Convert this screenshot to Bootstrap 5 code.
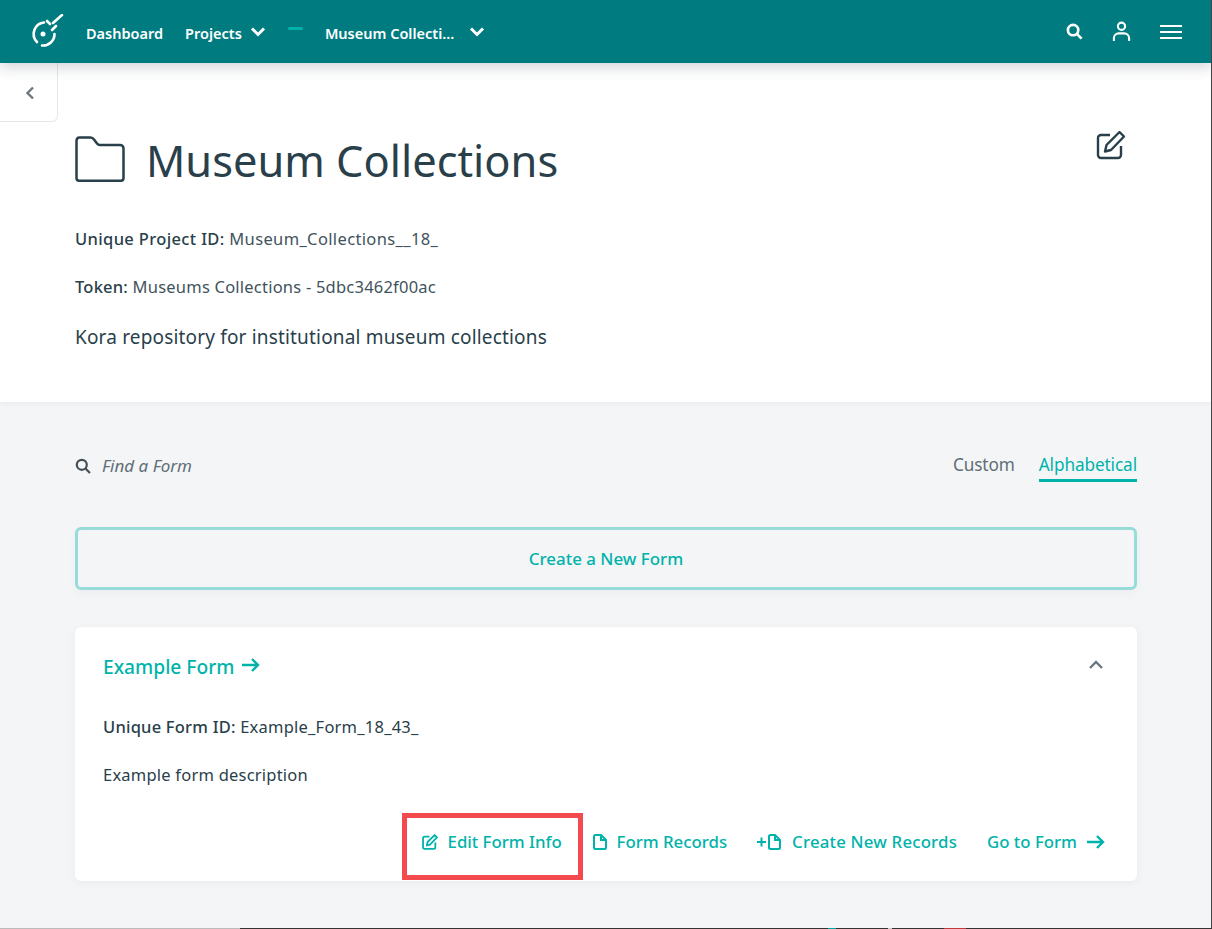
<!DOCTYPE html>
<html lang="en">
<head>
    <meta charset="UTF-8">
    <title>Museum Collections</title>
    <link href="https://cdn.jsdelivr.net/npm/bootstrap@5.3.0/dist/css/bootstrap.min.css" rel="stylesheet">
    <style>
        html, body { height: 100%; }
        body {
            font-family: "Noto Sans", "Open Sans", sans-serif;
            background: #f4f5f7;
            color: #29404a;
            overflow: hidden;
        }
        .top-bar {
            height: 63px;
            background: #007c80;
            box-shadow: 0 4px 14px rgba(21, 39, 48, .2);
            padding: 0 30px;
            position: relative;
            z-index: 2;
        }
        .top-link { color: #fff; font-size: 14.5px; font-weight: 600; text-decoration: none; white-space: nowrap; padding-top: 4px; }
        .top-dash { width: 15px; height: 3px; background: #00b3aa; border-radius: 2px; margin-top: -6px; margin-left: 22px; }
        .back-tab {
            position: absolute; left: 0; top: 63px; width: 58px; height: 59px;
            background: #fff; border: 1px solid #e5e7e9; border-top: 0; border-left: 0;
            border-radius: 0 0 6px 0; z-index: 1;
            padding: 2px 0 0 2px;
        }
        .head-panel { height: 339px; background: #fff; padding: 0 75px; box-shadow: 0 1px 6px rgba(21, 39, 48, .06); }
        .head-title { font-size: 43.400px; font-weight: 400; height: 46px; line-height: 50px; margin: 0 0 0 21px; color: #29404a; }
        .meta-line { font-size: 16.5px; letter-spacing: .22px; line-height: 22px; margin: 0; color: #3f535c; }
        .meta-line b { font-weight: 500; color: #29404a; }
        .meta-wide { letter-spacing: .36px; }
        .desc-line { font-size: 19px; letter-spacing: .17px; line-height: 26px; margin: 0; color: #29404a; }
        .edit-head { margin: 0 11px 28px 0; }
        .body-panel { padding: 0 75px; }
        .find-text { font-size: 17px; font-style: italic; color: #5f6e76; letter-spacing: 0; }
        .sort-group { padding-top: 2px; }
        .sort-link { font-size: 17.200px; color: #5f6e76; letter-spacing: -.1px; text-decoration: none; padding-bottom: 2px; line-height: 24px; }
        .sort-active { color: #00b3aa; border-bottom: 3px solid #00b3aa; }
        .new-form {
            height: 63px; border: 3px solid #97dcd8; border-radius: 6px; background: transparent;
            color: #00b3aa; font-size: 16.900px; font-weight: 500; padding-top: 2px;
            box-shadow: 0 4px 10px rgba(21, 39, 48, .03);
        }
        .form-box { height: 254px; background: #fff; border-radius: 6px; box-shadow: 0 2px 10px rgba(21, 39, 48, .05); padding: 0 32px 0 28px; }
        .form-name { color: #00b3aa; font-size: 19.200px; font-weight: 500; text-decoration: none; }
        .form-act { color: #00b3aa; font-size: 16.800px; font-weight: 500; text-decoration: none; white-space: nowrap; }
        .act-row { height: 67px; padding-bottom: 9px; gap: 10px; }
        .edit-mark { width: 181px; border: 5px solid #f24a4d; padding-left: 15px; }
        .screen-edge { position: fixed; top: 0; right: 0; width: 1px; height: 100%; background: #444; z-index: 5; }
        .screen-foot {
            position: fixed; left: 0; right: 0; bottom: 0; height: 1px; z-index: 5;
            background: linear-gradient(90deg, #bbb 0 240px, #333 240px 828px, #00a79d 828px 836px, #333 836px 888px, #ccc 888px 892px, #333 892px 944px, #c0393b 944px 966px, #333 966px);
        }
    </style>
</head>
<body>
    <nav class="top-bar d-flex align-items-center">
        <svg width="36" height="36" viewBox="0 0 36 36" fill="none" stroke="#fff" stroke-width="2.600" stroke-linecap="round">
            <path d="M14 8.500A11.500 11.500 0 0 0 7 28"/>
            <path d="M12 31.500A11.500 11.500 0 0 0 24.500 20"/>
            <path d="M23 9 32 1"/>
            <path d="M17 7l3 3"/>
            <path d="M22 16l4-4"/>
            <circle cx="13" cy="20" r="2.500" fill="#fff" stroke="none"/>
        </svg>
        <a class="top-link" style="margin-left:20px" href="#">Dashboard</a>
        <a class="top-link" style="margin-left:22px" href="#">Projects</a>
        <svg style="margin-left:8px" width="16" height="12" viewBox="0 0 16 12" fill="none" stroke="#fff" stroke-width="3"><path d="M2 2.500l6 6 6-6"/></svg>
        <div class="top-dash"></div>
        <a class="top-link" style="margin-left:22px" href="#">Museum Collecti...</a>
        <svg style="margin-left:15px" width="16" height="12" viewBox="0 0 16 12" fill="none" stroke="#fff" stroke-width="3"><path d="M2 2.500l6 6 6-6"/></svg>
        <div class="ms-auto d-flex align-items-center" style="gap:29px">
            <svg width="17" height="17" viewBox="0 0 18 18" fill="none" stroke="#fff" stroke-width="2.800"><circle cx="7.500" cy="7.500" r="5.500"/><path d="M11.500 11.500l5 5"/></svg>
            <svg width="19" height="21" viewBox="0 0 20 22" fill="none" stroke="#fff" stroke-width="2.200"><circle cx="10" cy="5.500" r="3.800"/><path d="M2 21v-3c0-3 2.500-5 5-5h6c2.500 0 5 2 5 5v3"/></svg>
            <svg width="22" height="16" viewBox="0 0 22 16" fill="none" stroke="#fff" stroke-width="2.200"><path d="M0 2h22M0 8h22M0 14h22"/></svg>
        </div>
    </nav>

    <div class="back-tab d-flex align-items-center justify-content-center">
        <svg width="10" height="14" viewBox="0 0 10 14" fill="none" stroke="#6c7780" stroke-width="2.400"><path d="M8 1.500 2.500 7 8 12.500"/></svg>
    </div>

    <section class="head-panel">
        <div class="d-flex align-items-center justify-content-between" style="padding-top:67px">
            <div class="d-flex align-items-center">
                <svg width="50" height="46" viewBox="0 0 50 46" fill="none" stroke="#29404a" stroke-width="2.500" stroke-linejoin="round">
                    <path d="M1.500 5c0-2 1-3.500 3-3.500h11c1.500 0 2.500.5 3.500 2l3 4c.7 1 1.500 1.500 3 1.500h20c2 0 3.500 1.500 3.500 3.500V42c0 1.800-1 2.700-2.500 2.700H4c-1.500 0-2.500-1-2.500-2.700z"/>
                </svg>
                <h1 class="head-title">Museum Collections</h1>
            </div>
            <svg class="edit-head" width="30" height="30" viewBox="0 0 30 30" fill="none" stroke="#29404a" stroke-width="2.400" stroke-linejoin="round">
                <path d="M14 5H5a3 3 0 0 0-3 3v17a3 3 0 0 0 3 3h17a3 3 0 0 0 3-3v-9"/>
                <path d="M23.500 2 28 6.500 15 20l-6 1.500L10.500 15z"/>
            </svg>
        </div>
        <p class="meta-line meta-wide" style="margin-top:40px"><b>Unique Project ID:</b> Museum_Collections__18_</p>
        <p class="meta-line" style="margin-top:26px"><b>Token:</b> Museums Collections - 5dbc3462f00ac</p>
        <p class="desc-line" style="margin-top:26px">Kora repository for institutional museum collections</p>
    </section>

    <main class="body-panel">
        <div class="d-flex justify-content-between align-items-center" style="padding-top:48px;height:80px">
            <div class="d-flex align-items-center gap-2">
                <svg width="16" height="16" viewBox="0 0 16 16" fill="none" stroke="#444f55" stroke-width="2.200"><circle cx="6.800" cy="6.800" r="5"/><path d="M10.500 10.500l4.500 4.500"/></svg>
                <span class="find-text" style="margin-left:3px">Find a Form</span>
            </div>
            <div class="sort-group d-flex gap-4">
                <a class="sort-link" href="#">Custom</a>
                <a class="sort-link sort-active" href="#">Alphabetical</a>
            </div>
        </div>
        <button class="new-form w-100 d-block" style="margin-top:45px">Create a New Form</button>
        <article class="form-box" style="margin-top:37px">
            <div class="d-flex justify-content-between align-items-center" style="padding-top:26px">
                <a class="form-name d-flex align-items-center gap-2" href="#">Example Form
                    <svg class="mb-1" width="18" height="16" viewBox="0 0 18 16" fill="none" stroke="#00b3aa" stroke-width="2.400"><path d="M0 8h16M10 2l6 6-6 6"/></svg>
                </a>
                <svg style="margin:-4px 1px 0 0" width="16" height="10" viewBox="0 0 16 10" fill="none" stroke="#6c7780" stroke-width="2.400"><path d="M2 8l6-6 6 6"/></svg>
            </div>
            <p class="meta-line" style="margin-top:34px;color:#29404a"><b>Unique Form ID:</b> Example_Form_18_43_</p>
            <p class="meta-line" style="margin-top:26px;color:#29404a">Example form description</p>
            <div class="d-flex justify-content-end align-items-center" style="margin-top:27px">
                <div class="act-row edit-mark d-flex align-items-center">
                    <svg width="16" height="16" viewBox="0 0 30 30" fill="none" stroke="#00b3aa" stroke-width="3.400" stroke-linejoin="round"><path d="M14 5H5a3 3 0 0 0-3 3v17a3 3 0 0 0 3 3h17a3 3 0 0 0 3-3v-9"/><path d="M23.500 2 28 6.500 15 20l-6 1.500L10.500 15z"/></svg>
                    <a class="form-act" href="#">Edit Form Info</a>
                </div>
                <div class="act-row d-flex align-items-center" style="margin-left:10px">
                    <svg width="14" height="16" viewBox="0 0 14 16" fill="none" stroke="#00b3aa" stroke-width="2"><path d="M1 2.500C1 1.500 1.500 1 2.500 1H8l5 5v7.500c0 1-.5 1.500-1.500 1.500h-9C1.500 15 1 14.500 1 13.500z"/><path d="M8 1v5h5"/></svg>
                    <a class="form-act" href="#">Form Records</a>
                </div>
                <div class="act-row d-flex align-items-center" style="margin-left:30px">
                    <svg width="24" height="16" viewBox="0 0 24 16" fill="none" stroke="#00b3aa" stroke-width="2"><path d="M0 8h9M4.500 3.500v9"/><path d="M12 2.500C12 1.500 12.500 1 13.500 1H18l5 5v7.500c0 1-.5 1.500-1.500 1.500h-8c-1 0-1.500-.5-1.500-1.500z"/><path d="M18 1v5h5"/></svg>
                    <a class="form-act" style="margin-left:1px;letter-spacing:.2px" href="#">Create New Records</a>
                </div>
                <div class="act-row d-flex align-items-center" style="margin-left:30px">
                    <a class="form-act" href="#">Go to Form</a>
                    <svg width="18" height="16" viewBox="0 0 18 16" fill="none" stroke="#00b3aa" stroke-width="2.400"><path d="M0 8h16M10 2l6 6-6 6"/></svg>
                </div>
            </div>
        </article>
    </main>
    <div class="screen-edge"></div>
    <div class="screen-foot"></div>
    <script src="https://cdn.jsdelivr.net/npm/bootstrap@5.3.0/dist/js/bootstrap.bundle.min.js"></script>
</body>
</html>
